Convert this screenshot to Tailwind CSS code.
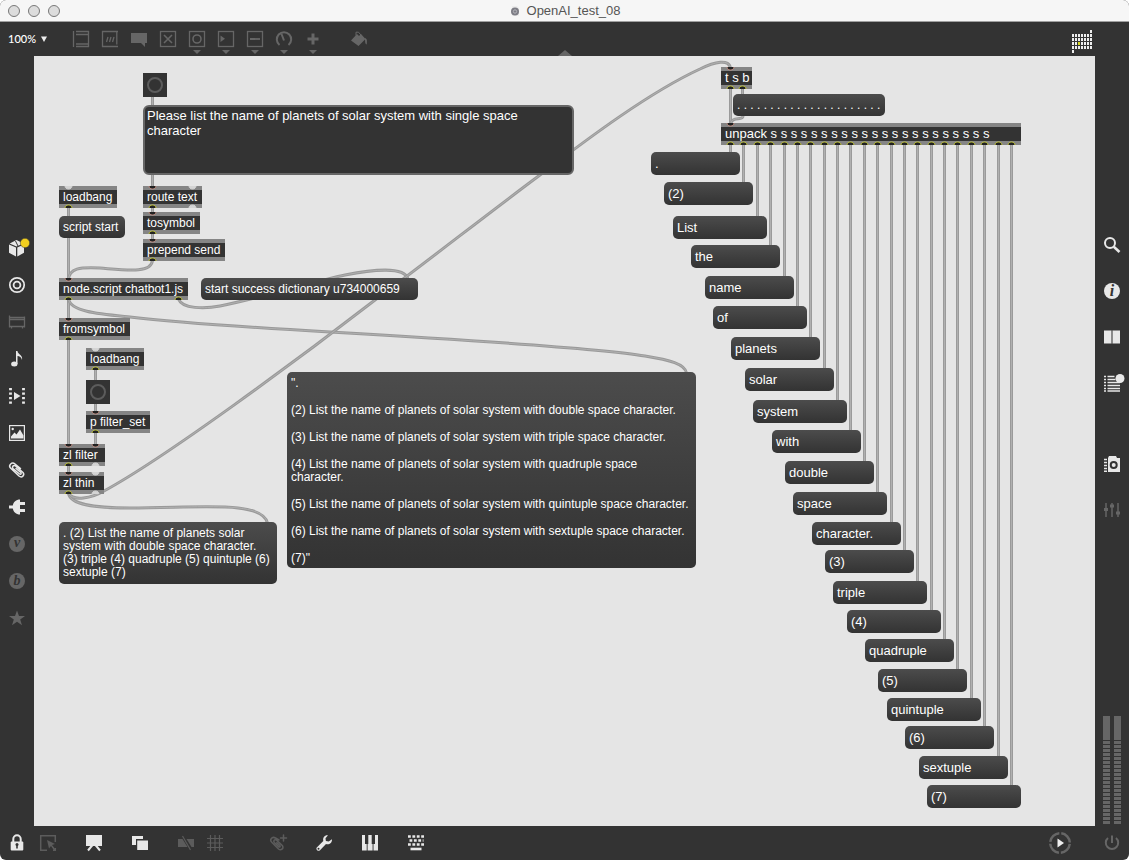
<!DOCTYPE html>
<html lang="en">
<head>
    <meta charset="UTF-8">
    <meta name="viewport" content="width=device-width, initial-scale=1.0">
    <title>OpenAI_test_08</title>
    <script src="https://cdn.jsdelivr.net/npm/@tailwindcss/browser@4"></script>
</head>
<body class="bg-white font-['Liberation_Sans',Arial,sans-serif]">
<div class="h-screen flex flex-col bg-[#333] rounded-md overflow-hidden">

    <!-- title bar -->
    <header class="relative h-[22px] shrink-0 flex items-center justify-center bg-[#f6f6f6] border-b border-[#a0a0a0]">
        <div class="absolute left-2 flex gap-2">
            <button aria-label="Close" class="size-3 rounded-full border border-[#777] bg-[#dcdcdc]"></button>
            <button aria-label="Minimize" class="size-3 rounded-full border border-[#777] bg-[#dcdcdc]"></button>
            <button aria-label="Zoom" class="size-3 rounded-full border border-[#777] bg-[#dcdcdc]"></button>
        </div>
        <svg class="size-3 mr-1.5" viewBox="0 0 12 12"><path d="M3 1h5l2 2v8H3z" fill="#ececec"/><circle cx="6" cy="6.500" r="4" fill="#7d7d85"/><circle cx="6" cy="6.500" r="1.700" fill="none" stroke="#b5b5bb"/></svg>
        <h1 class="text-[13px] leading-4 text-[#555]">OpenAI_test_08</h1>
    </header>

    <!-- top toolbar -->
    <nav class="relative h-[34px] shrink-0 flex items-center pl-2 text-[#666]">
        <label class="flex items-center text-[#eee]">
            <select aria-label="Zoom level" class="appearance-none w-8 font-[Lato,sans-serif] font-medium text-[11px] leading-4 text-white"><option>100%</option></select>
            <svg class="w-2 h-2" viewBox="0 0 8 8"><path d="M1 1.500h6L4 7z" fill="#eee"/></svg>
        </label>
        <div class="flex ml-[18px]">
            <button aria-label="Object" class="relative w-[29px] flex justify-center"><svg class="size-5" viewBox="0 0 20 20" fill="none" stroke="currentColor" stroke-width="1.300"><path d="M2.500 2v16M5 2.500h13M5 5.500h13M5 15h13M5 17.500h13M17.500 2v16"/></svg></button>
            <button aria-label="Message" class="relative w-[29px] flex justify-center"><svg class="size-5" viewBox="0 0 20 20" fill="none" stroke="currentColor" stroke-width="1.300"><path d="M18 2.500H2.500v15H18M16.800 2.500v13M8 8l-1.500 5M11 8l-1.500 5M14 8l-1.500 5"/></svg></button>
            <button aria-label="Comment" class="relative w-[29px] flex justify-center"><svg class="size-5" viewBox="0 0 20 20" fill="currentColor"><path d="M2 4h16v10h-2v4l-4-4H2z"/></svg></button>
            <button aria-label="Toggle" class="relative w-[29px] flex justify-center"><svg class="size-5" viewBox="0 0 20 20" fill="none" stroke="currentColor" stroke-width="1.300"><rect x="2.500" y="2.500" width="15" height="15"/><path d="M6 6l8 8M14 6l-8 8" stroke-width="1.600"/></svg></button>
            <button aria-label="Button" class="relative w-[29px] flex justify-center"><svg class="size-5" viewBox="0 0 20 20" fill="none" stroke="currentColor" stroke-width="1.300"><rect x="2.500" y="2.500" width="15" height="15"/><circle cx="10" cy="10" r="4" stroke-width="1.600"/></svg><svg class="absolute top-[21px] w-2 h-1" viewBox="0 0 8 4"><path d="M0 0h8L4 4z" fill="currentColor"/></svg></button>
            <button aria-label="Number" class="relative w-[29px] flex justify-center"><svg class="size-5" viewBox="0 0 20 20" fill="none" stroke="currentColor" stroke-width="1.300"><rect x="2.500" y="2.500" width="15" height="15"/><path d="M4.500 6.500v6.500l4.500-3.200z" fill="currentColor" stroke="none"/></svg><svg class="absolute top-[21px] w-2 h-1" viewBox="0 0 8 4"><path d="M0 0h8L4 4z" fill="currentColor"/></svg></button>
            <button aria-label="Slider" class="relative w-[29px] flex justify-center"><svg class="size-5" viewBox="0 0 20 20" fill="none" stroke="currentColor" stroke-width="1.300"><rect x="2.500" y="2.500" width="15" height="15"/><path d="M5 10h10" stroke-width="1.800"/></svg><svg class="absolute top-[21px] w-2 h-1" viewBox="0 0 8 4"><path d="M0 0h8L4 4z" fill="currentColor"/></svg></button>
            <button aria-label="Dial" class="relative w-[29px] flex justify-center"><svg class="size-5" viewBox="0 0 20 20" fill="none" stroke="currentColor" stroke-width="2"><path d="M5.500 16A7.200 7.200 0 1 1 14.500 16M10 11.500L7.500 5"/></svg><svg class="absolute top-[21px] w-2 h-1" viewBox="0 0 8 4"><path d="M0 0h8L4 4z" fill="currentColor"/></svg></button>
            <button aria-label="Add" class="relative w-[29px] flex justify-center"><svg class="size-5" viewBox="0 0 20 20" fill="none" stroke="currentColor" stroke-width="3"><path d="M10 4.500v11M4.500 10h11"/></svg><svg class="absolute top-[21px] w-2 h-1" viewBox="0 0 8 4"><path d="M0 0h8L4 4z" fill="currentColor"/></svg></button>
            <button aria-label="Format" class="ml-[17px] w-[29px] flex justify-center"><svg class="size-5" viewBox="0 0 20 20" fill="currentColor"><path d="M2 11.500L8 5l2 2 2-2 4.500 5L9.500 17z"/><path d="M7 6.500V3.200h2.500l3 3.500" fill="none" stroke="currentColor"/><path d="M15.500 9c3 .5 2.500 3 2.300 6.500-2.500-1-1-4-2.300-6.500z"/></svg></button>
        </div>
        <svg class="absolute left-1/2 bottom-0 -translate-x-1/2 w-3.5 h-1.5" viewBox="0 0 14 6"><path d="M7 0l7 6H0z" fill="#666"/></svg>
        <button aria-label="Window grid" class="ml-auto mr-[36px] mt-1.5"><svg id="grid" class="w-[21px] h-6" viewBox="0 0 21 24"></svg></button>
    </nav>

    <div class="flex-1 min-h-0 flex">
        <!-- left side bar -->
        <aside class="w-[34px] shrink-0 flex flex-col justify-center pb-4 text-[#e8e8e8]">
            <button aria-label="Packages" class="relative h-[37px] flex items-center justify-center"><svg class="size-5 overflow-visible" viewBox="0 0 20 20" fill="currentColor"><path d="M2 6.500l7 3v9l-7-3.700zM10.300 9.500L17 6.500v8.300l-6.700 3.700zM2.700 5.400L9.500 2l6.800 3.400-6.800 3z"/><path d="M8.500 3L11 8" stroke="#333"/><circle cx="18" cy="5" r="4.700" fill="#f2cf1f" stroke="#333" stroke-width=".5"/></svg></button>
            <button aria-label="Patching" class="h-[37px] flex items-center justify-center"><svg class="size-5" viewBox="0 0 20 20" fill="none" stroke="currentColor"><circle cx="10" cy="10" r="7.200" stroke-width="1.700"/><circle cx="10" cy="10" r="3.400" stroke-width="1.800"/></svg></button>
            <button aria-label="Plug-ins" class="h-[37px] flex items-center justify-center text-[#666]"><svg class="size-5" viewBox="0 0 20 20" fill="none" stroke="currentColor" stroke-width="1.300"><path d="M2.500 3.500v12M17.500 4.500v11M2 5.500h16M2 7.500h16M2.500 14.500h15M4.500 14.500v2M15.500 14.500v2"/></svg></button>
            <button aria-label="Audio" class="h-[37px] flex items-center justify-center"><svg class="size-5" viewBox="0 0 20 20" fill="currentColor"><ellipse cx="7.300" cy="15" rx="3.200" ry="2.500"/><path d="M9 15V2h1.500c0 3.500 5.500 3.500 4.500 9-.5-3-2.500-3.800-4.500-4v8z"/></svg></button>
            <button aria-label="Video" class="h-[37px] flex items-center justify-center"><svg class="size-5" viewBox="0 0 20 20" fill="currentColor"><path d="M7 6v8l6.500-4z"/><path d="M3.500 2v16M16.500 2v16" stroke="currentColor" stroke-width="2.800" stroke-dasharray="2.300 2.200"/></svg></button>
            <button aria-label="Images" class="h-[37px] flex items-center justify-center"><svg class="size-5" viewBox="0 0 20 20" fill="currentColor"><rect x="2.600" y="2.600" width="14.800" height="14.800" fill="none" stroke="currentColor" stroke-width="1.200"/><path d="M4 15.500v-2l3.500-4 2 2 3.500-5 3.500 6v3z"/><circle cx="5.700" cy="6" r="1.200"/></svg></button>
            <button aria-label="Attachments" class="h-[37px] flex items-center justify-center"><svg class="size-5" viewBox="0 0 20 20" fill="none" stroke="currentColor" stroke-width="1.500" stroke-linecap="round"><path d="M13.500 8.500L8 4C5 1.500 1 5 3.500 8l8.500 8c3 2.500 6-1 4-3.500L8.500 6C6.500 4.500 4.500 7 6 8.500l6.500 5.500c1.200.8 2.200-.4 1.300-1.500L9 8.500"/></svg></button>
            <button aria-label="Connect" class="h-[37px] flex items-center justify-center"><svg class="size-5" viewBox="0 0 20 20" fill="currentColor"><path d="M13 2.500v15c-4 0-6.500-2.500-7.200-6H2v-3h3.800c.7-3.500 3.200-6 7.200-6z"/><path d="M13 5h5v3h-5zM13 12h5v3h-5z"/></svg></button>
            <button aria-label="Vizzie" class="h-[37px] flex items-center justify-center"><span class="size-4 rounded-full bg-[#666] text-[#333] font-['Liberation_Serif',serif] italic font-bold text-sm leading-3.5">v</span></button>
            <button aria-label="Beap" class="h-[37px] flex items-center justify-center"><span class="size-4 rounded-full bg-[#666] text-[#333] font-['Liberation_Serif',serif] italic font-bold text-sm leading-4">b</span></button>
            <button aria-label="Favorites" class="h-[37px] flex items-center justify-center text-[#666]"><svg class="size-5" viewBox="0 0 20 20" fill="currentColor"><path d="M10 2.500l2 5.500h6l-4.800 3.500 1.800 5.800-5-3.500-5 3.500 1.800-5.800L2 8h6z"/></svg></button>
        </aside>

        <!-- patcher -->
        <main id="patcher" class="relative flex-1 min-w-0 overflow-hidden bg-[#e5e5e5] text-white">
            <svg id="cords" class="absolute inset-0 size-full" fill="none"></svg>
            <div id="objects"></div>
            <svg id="ports" class="absolute inset-0 size-full pointer-events-none"></svg>
        </main>

        <!-- right side bar -->
        <aside class="w-[34px] shrink-0 flex flex-col pt-[166px] text-[#e8e8e8]">
            <button aria-label="Search" class="h-[46px] flex items-center justify-center"><svg class="size-5" viewBox="0 0 20 20" fill="none" stroke="currentColor"><circle cx="8" cy="8" r="5" stroke-width="2"/><path d="M11.800 11.800L17.500 17" stroke-width="2.600"/></svg></button>
            <button aria-label="Inspector" class="h-[46px] flex items-center justify-center"><span class="size-4 rounded-full bg-[#e8e8e8] text-[#333] font-['Liberation_Serif',serif] italic font-bold text-base leading-4">i</span></button>
            <button aria-label="Reference" class="h-[46px] flex items-center justify-center"><svg class="size-5" viewBox="0 0 20 20" fill="currentColor"><path d="M2 3.500h7.400v13H2zM10.600 3.500H18v13h-7.400z"/><path d="M10 3.500v13" stroke="#999"/></svg></button>
            <button aria-label="Console" class="h-[46px] flex items-center justify-center"><svg class="size-5 overflow-visible" viewBox="0 0 20 20" fill="currentColor"><path d="M2 3.500h2M2 6.500h2M2 9.500h2M2 12.500h2M2 15.500h2M2 18h2M5.500 3.500h7M5.500 6.500h8M5.500 9.500H18M5.500 12.500H18M5.500 15.500H18M5.500 18H18" stroke="currentColor" stroke-width="1.600"/><circle cx="18" cy="5.500" r="4.500"/></svg></button>
            <button aria-label="Snapshots" class="mt-[35px] h-[46px] flex items-center justify-center"><svg class="size-5" viewBox="0 0 20 20" fill="currentColor"><path d="M6 4l1-2h7l1 2h3v14H6z"/><path d="M2 5.500h3M2 8.500h3M2 11.500h3M2 14.500h3M2 17.200h3" stroke="currentColor" stroke-width="1.600"/><circle cx="11.700" cy="11" r="3" fill="none" stroke="#333" stroke-width="2"/></svg></button>
            <button aria-label="Parameters" class="h-[46px] flex items-center justify-center text-[#666]"><svg class="size-5" viewBox="0 0 20 20" fill="none" stroke="currentColor"><path d="M4 3v14M10 3v14M16 3v14" stroke-width="1.500"/><path d="M2 9.500h4M8 6h4M14 13h4" stroke-width="3"/></svg></button>
            <div class="mt-auto mb-0.5 flex justify-center gap-1" role="img" aria-label="Output level">
                <div class="w-[7px]"><div class="h-6 bg-[#666]"></div><div class="h-[84px] bg-[repeating-linear-gradient(#333_0_1px,#666_1px_4px)]"></div></div>
                <div class="w-[7px]"><div class="h-6 bg-[#666]"></div><div class="h-[84px] bg-[repeating-linear-gradient(#333_0_1px,#666_1px_4px)]"></div></div>
            </div>
        </aside>
    </div>

    <!-- bottom toolbar -->
    <footer class="h-[34px] shrink-0 flex items-center px-[3px] text-[#e8e8e8]">
        <button aria-label="Lock" class="w-7 flex justify-center"><svg class="size-5" viewBox="0 0 20 20"><path d="M6.300 9V6a3.700 3.700 0 0 1 7.400 0v3" fill="none" stroke="currentColor" stroke-width="2"/><rect x="3.700" y="8.500" width="12.600" height="9" rx="1" fill="currentColor"/><path d="M10 11v4.500" stroke="#333" stroke-width="1.600"/><circle cx="10" cy="11.500" r="1.500" fill="#333"/></svg></button>
        <button aria-label="Select" class="ml-[3px] w-7 flex justify-center text-[#5c5c5c]"><svg class="size-5" viewBox="0 0 20 20" fill="none" stroke="currentColor" stroke-width="1.500"><path d="M9 17.300H2.700V2.700h14.600V9M17.300 15v2.300H15"/><path d="M9 7l8 4-3 1 4 5-1.500 1-3.500-5-2 2.500z" fill="currentColor" stroke="none"/></svg></button>
        <button aria-label="Presentation" class="ml-[18px] w-7 flex justify-center"><svg class="size-5" viewBox="0 0 20 20" fill="currentColor"><path d="M2 2h16v11H2z"/><path d="M8.500 12L4 17.500M11.500 12l4.500 5.500" stroke="currentColor" stroke-width="2"/></svg></button>
        <button aria-label="Windows" class="ml-[18px] w-7 flex justify-center"><svg class="size-5" viewBox="0 0 20 20" fill="currentColor"><path d="M2 3h11v3H6v6H2z"/><path d="M7.200 7.500H18V17H7.200z"/></svg></button>
        <button aria-label="Signal probe" class="ml-[18px] w-7 flex justify-center text-[#5c5c5c]"><svg class="size-5" viewBox="0 0 20 20" fill="currentColor"><path d="M2 6h4.500l5 8H2zM10.500 6H18v8h-2.500z"/><path d="M6.500 3l8 14" stroke="currentColor" stroke-width="1.200"/></svg></button>
        <button aria-label="Grid" class="ml-px w-7 flex justify-center text-[#5c5c5c]"><svg class="size-5" viewBox="0 0 20 20" fill="none" stroke="currentColor" stroke-width="1.200"><path d="M5.500 2v16M10 2v16M14.500 2v16M2 5.500h16M2 10h16M2 14.500h16"/></svg></button>
        <button aria-label="Add attachment" class="ml-[35px] w-7 flex justify-center text-[#5c5c5c]"><svg class="size-5" viewBox="0 0 20 20" fill="none" stroke="currentColor" stroke-width="1.500" stroke-linecap="round"><path d="M11 7L7.500 5C4 3 1 7 4 9.500l6.500 6.500c2.500 2 5.500-.5 4-3.200L8.500 7.200C6.500 6 5 8 6.300 9.500l4.500 4.300c1 .7 1.800-.3 1-1.300l-3-2.800M15.500 2v6M12.500 5h6"/></svg></button>
        <button aria-label="Tools" class="ml-[18px] w-7 flex justify-center"><svg class="size-5" viewBox="0 0 20 20" fill="currentColor"><path d="M14 2.300l-2.500 3 .4 2.800 2.800.3 3.300-2.200c.3 3.800-3 5.800-6 4.800L6 17.200C4 19 1.200 16.400 3 14.300L9.300 8C8.500 4.500 10.800 1.800 14 2.300z"/><circle cx="4.500" cy="15.700" r="1" fill="#333"/></svg></button>
        <button aria-label="Piano" class="ml-[18px] w-7 flex justify-center"><svg class="size-5" viewBox="0 0 20 20" fill="currentColor"><path d="M2 2h3v9h1.700v6.500H2zM8.300 2h3.400v9h.9v6.500h-5V11h.7zM15 2h3v15.500h-4.500V11H15z"/></svg></button>
        <button aria-label="Keyboard" class="ml-[18px] w-7 flex justify-center"><svg class="size-5" viewBox="0 0 20 20" fill="none" stroke="currentColor" stroke-width="2.600"><path d="M2 3.500h16M2 11.500h16" stroke-dasharray="2.800 1.600"/><path d="M3.500 7.500h14" stroke-dasharray="2.800 1.600"/><path d="M4.500 16h11"/></svg></button>
        <button aria-label="Run" class="ml-auto w-7 flex justify-center"><svg class="size-6" viewBox="0 0 24 24"><circle cx="12" cy="12" r="9.800" fill="none" stroke="#666" stroke-width="2.500" stroke-dasharray="13.400 2" stroke-dashoffset="-1"/><path d="M9.500 7.500v9l6.500-4.500z" fill="#eee"/></svg></button>
        <button aria-label="Audio on" class="ml-6 w-7 flex justify-center text-[#666]"><svg class="size-5" viewBox="0 0 20 20" fill="none" stroke="currentColor" stroke-width="2"><path d="M6 5a6.200 6.200 0 1 0 8 0M10 2.500v7.500"/></svg></button>
    </footer>
</div>

<script>
    // patcher window coordinates start at the window's corner, the canvas sits below the toolbars
    const OX = 34, OY = 56;

    const objectBoxes = [
        { x: 59, y: 186, w: 58, text: "loadbang", freeIn: [68], out: [68] },
        { x: 143, y: 186, w: 59, text: "route text", in: [152], freeIn: [192], out: [152], freeOut: [192] },
        { x: 143, y: 212, w: 57, text: "tosymbol", in: [152], out: [152] },
        { x: 143, y: 239, w: 82, text: "prepend send", in: [152], out: [152] },
        { x: 59, y: 278, w: 129, text: "node.script chatbot1.js", in: [68], out: [68, 178] },
        { x: 59, y: 318, w: 71, text: "fromsymbol", in: [68], out: [68] },
        { x: 86, y: 348, w: 58, text: "loadbang", freeIn: [95], out: [95] },
        { x: 86, y: 411, w: 64, text: "p filter_set", in: [95], out: [95] },
        { x: 59, y: 444, w: 46, text: "zl filter", in: [68, 95], out: [68], freeOut: [95] },
        { x: 59, y: 472, w: 45, text: "zl thin", in: [68], freeIn: [95], out: [68], freeOut: [95] },
        { x: 721, y: 67, w: 31, text: "t s b", big: true, in: [730], out: [730, 742] },
        { x: 721, y: 123, w: 300, text: "unpack" + " s".repeat(22), big: true, in: [730], out: [] },
    ];

    const messages = [
        { x: 59, y: 216, w: 66, text: "script start" },
        { x: 201, y: 278, w: 217, text: "start success dictionary u734000659" },
        { x: 733, y: 94, w: 152, text: Array(22).fill(".").join(" ") },
    ];

    const longMessages = [
        { x: 59, y: 522, w: 218, h: 62, lines: [". (2) List the name of planets solar system with double space character. (3) triple (4) quadruple (5) quintuple (6) sextuple (7)"] },
        { x: 287, y: 372, w: 409, h: 196, lines: [
            '".',
            "(2) List the name of planets of solar system with double space character.",
            "(3) List the name of planets of solar system with triple space character.",
            "(4) List the name of planets of solar system with quadruple space character.",
            "(5) List the name of planets of solar system with quintuple space character.",
            "(6) List the name of planets of solar system with sextuple space character.",
            '(7)"' ] },
    ];

    // x, y, width, text
    const words = [
        [651, 152, 89, "."], [664, 182, 89, "(2)"], [673, 216, 94, "List"], [691, 245, 89, "the"],
        [705, 276, 89, "name"], [713, 306, 94, "of"], [731, 337, 89, "planets"], [745, 368, 89, "solar"],
        [753, 400, 94, "system"], [772, 430, 89, "with"], [785, 461, 89, "double"], [793, 492, 94, "space"],
        [812, 522, 89, "character."], [825, 550, 89, "(3)"], [833, 581, 94, "triple"], [847, 610, 94, "(4)"],
        [865, 639, 89, "quadruple"], [878, 669, 89, "(5)"], [887, 698, 94, "quintuple"], [905, 726, 89, "(6)"],
        [919, 756, 89, "sextuple"], [927, 785, 94, "(7)"],
    ];

    const cordPaths = [
        "M152.500 97V105", "M152.500 175V187", "M152.500 207V213", "M152.500 233V240",
        "M68.500 207V279", "M152.500 260C152 274 125 270 100 268C80 267 69 268 68.500 280",
        "M68.500 299V319", "M68.500 339V445", "M68.500 465V473",
        "M95.500 369V381", "M95.500 404V412", "M95.500 432V445",
        "M178.500 299C182 309 205 309 220 306C260 298 320 280 345 275C375 269 405 267 408 279",
        "M68.500 299C71 312 100 314 130 317C180 323 260 328 330 332S600 348 645 356C670 360 685 364 686.500 373",
        "M68.500 493C70 505 95 508 130 508C200 508 262 500 267.500 523",
        "M68.500 493C73 502 92 498 104 491C165 458 300 358 375 300C420 267 490 212 540 175C590 137 650 92 700 69C714 62 730 58 730.500 69",
        "M730.500 88V124", "M742.500 88V95", "M743 116C743 121 732 116 731 123",
    ];

    const objectsEl = document.getElementById("objects");
    const cordsEl = document.getElementById("cords");
    const portsEl = document.getElementById("ports");

    function place(box) {
        const height = box.h ? `;height:${box.h}px` : "";
        return `style="left:${box.x - OX}px;top:${box.y - OY}px;width:${box.w}px${height}"`;
    }

    function portX(i) {
        return Math.round(730 + i * 13.38);
    }

    words.forEach((w, i) => {
        objectBoxes[11].out.push(portX(i));
        cordPaths.push(`M${portX(i) + 0.5} 144V${w[1] + 1}`);
    });

    let html = "";
    [[143, 73], [86, 380]].forEach(([x, y]) => {
        html += `<button aria-label="Bang" class="absolute h-6 flex items-center justify-center bg-[#333]" ${place({ x, y, w: 24 })}><span class="size-4 rounded-full border-2 border-[#5c5c5c]"></span></button>`;
    });
    html += `<textarea aria-label="Prompt" class="absolute h-[70px] resize-none rounded-md border-2 border-[#666] bg-[#333] px-0.5 py-px text-[13px] leading-[15px]" ${place({ x: 143, y: 105, w: 431 })}>Please list the name of planets of solar system with single space character</textarea>`;
    objectBoxes.forEach(b => {
        const size = b.big ? "text-[13px]" : "text-xs";
        html += `<div class="absolute h-[22px] flex items-center px-1 whitespace-nowrap bg-[#333] border-y-4 border-[#858585] leading-3.5 ${size}" ${place(b)}>${b.text}</div>`;
    });
    messages.forEach(m => {
        html += `<button class="absolute h-[22px] px-1 rounded-[5px] text-left whitespace-nowrap bg-linear-to-b from-[#4c4c4c] to-[#333] text-xs" ${place(m)}>${m.text}</button>`;
    });
    words.forEach(([x, y, w, text]) => {
        html += `<button class="absolute h-[23px] px-1 rounded-[5px] text-left bg-linear-to-b from-[#4c4c4c] to-[#333] text-[13px] leading-4" ${place({ x, y, w })}>${text}</button>`;
    });
    longMessages.forEach(m => {
        html += `<button class="absolute px-1 py-[5px] rounded-[5px] flex flex-col gap-3.5 text-left bg-linear-to-b from-[#4c4c4c] to-[#333] text-xs leading-[13px]" ${place(m)}>${m.lines.map(l => `<span>${l}</span>`).join("")}</button>`;
    });
    objectsEl.innerHTML = html;

    cordsEl.innerHTML = `<g transform="translate(${-OX} ${-OY})">` + cordPaths.map(d =>
        `<path d="${d}" stroke="#9a9a9a" stroke-width="3"/><path d="${d}" stroke="#b0b0b0" stroke-width="1"/>`).join("") + "</g>";

    // inlets hang from the top edge, outlets stand on the bottom edge
    function port(x, y, dir, fill, stroke) {
        return `<path d="M${x - 3} ${y}c0 ${dir * 4} 7 ${dir * 4} 7 0z" fill="${fill}"/><path d="M${x - 3} ${y}c0 ${dir * 4} 7 ${dir * 4} 7 0" fill="none" stroke="${stroke}"/>`;
    }
    let ports = "";
    objectBoxes.forEach(b => {
        const bottom = b.y + 22;
        (b.in || []).forEach(x => ports += port(x, b.y, 1, "#222", "#c08c80"));
        (b.freeIn || []).forEach(x => ports += port(x, b.y, 1, "#d4d4d4", "#d4d4d4"));
        (b.out || []).forEach(x => ports += port(x, bottom, -1, "#222", "#c0c438"));
        (b.freeOut || []).forEach(x => ports += port(x, bottom, -1, "#d4d4d4", "#d4d4d4"));
    });
    portsEl.innerHTML = `<g transform="translate(${-OX} ${-OY})">${ports}</g>`;

    // window grid icon
    let cells = "";
    for (let r = 0; r < 6; r++) {
        for (let c = 0; c < 7; c++) {
            if ((r === 0 && c < 6) || (r === 5 && c > 0)) continue;
            cells += `<rect x="${c * 3}" y="${r * 4}" width="2" height="3" fill="${r === 3 && c === 2 ? "#d8d820" : "#eee"}"/>`;
        }
    }
    document.getElementById("grid").innerHTML = cells;
</script>
</body>
</html>
